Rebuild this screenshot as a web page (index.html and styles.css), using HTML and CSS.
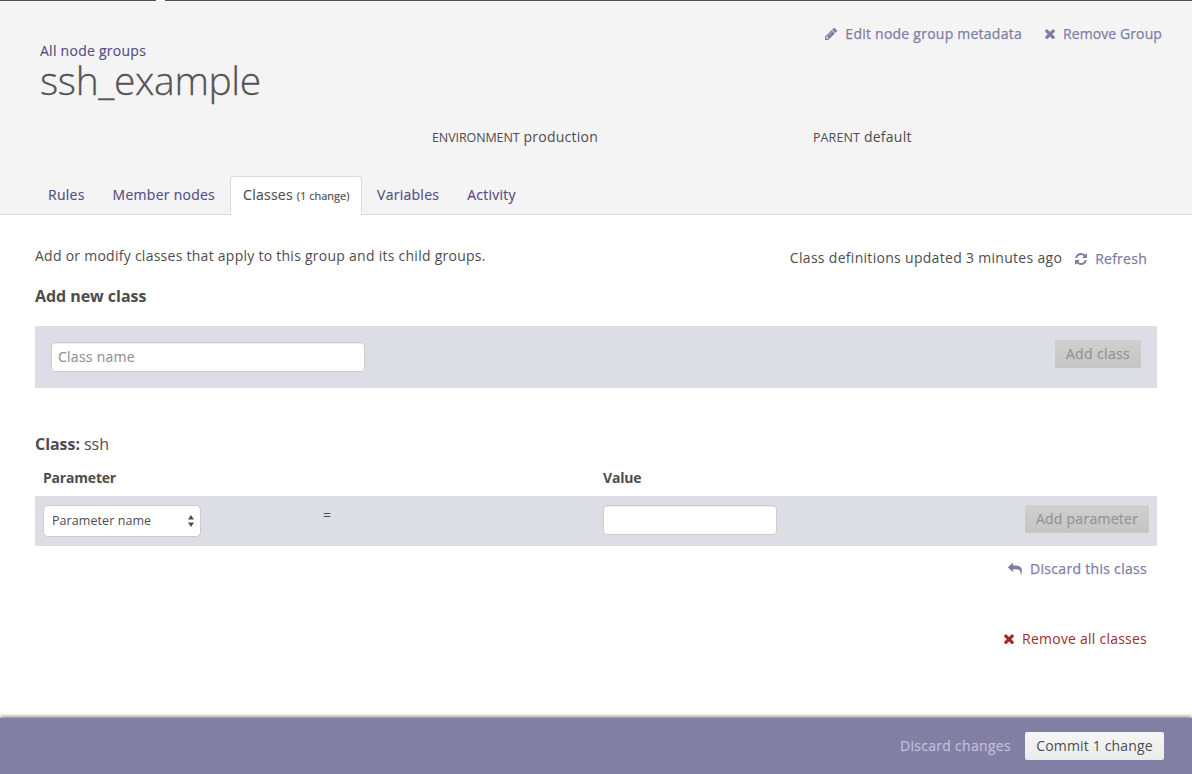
FILE: index.html
```html
<!DOCTYPE html>
<html lang="en">
<head>
<meta charset="utf-8">
<title>ssh_example</title>
<link rel="stylesheet" href="styles.css">
</head>
<body>
<svg class="defs" width="0" height="0">
  <symbol id="times" viewBox="302 346 1188 1188"><path d="M1490 1322q0 40-28 68l-136 136q-28 28-68 28t-68-28l-294-294-294 294q-28 28-68 28t-68-28l-136-136q-28-28-28-68t28-68l294-294-294-294q-28-28-28-68t28-68l136-136q28-28 68-28t68 28l294 294 294-294q28-28 68-28t68 28l136 136q28 28 28 68t-28 68l-294 294 294 294q28 28 28 68z"/></symbol>
  <symbol id="pencil" viewBox="128 149 1515 1515"><path d="M491 1536l91-91-235-235-91 91v107h128v128h107zm523-928q0-22-22-22-10 0-17 7l-542 542q-7 7-7 17 0 22 22 22 10 0 17-7l542-542q7-7 7-17zm-54-192l416 416-832 832h-416v-416zm683 96q0 53-37 90l-166 166-416-416 166-165q36-38 90-38 53 0 91 38l235 234q37 39 37 91z"/></symbol>
  <symbol id="refresh" viewBox="128 128 1536 1536"><path d="M1639 1056q0 5-1 7-64 268-268 434.5t-478 166.5q-146 0-282.5-55t-243.5-157l-129 129q-19 19-45 19t-45-19-19-45v-448q0-26 19-45t45-19h448q26 0 45 19t19 45-19 45l-137 137q71 66 161 102t187 36q134 0 250-65t186-179q11-17 53-117 8-23 30-23h192q13 0 22.5 9.5t9.5 22.5zm25-800v448q0 26-19 45t-45 19h-448q-26 0-45-19t-19-45 19-45l138-138q-148-137-349-137-134 0-250 65t-186 179q-11 17-53 117-8 23-30 23h-199q-13 0-22.5-9.5t-9.5-22.5v-7q65-268 270-434.5t480-166.5q146 0 284 55.5t245 156.5l130-129q19-19 45-19t45 19 19 45z"/></symbol>
  <symbol id="reply" viewBox="0 0 14 12"><path d="M.2 4.1 4.2.2Q5 -.2 5.1.5V2.5H7Q14 2.5 14 8Q14 9.500 12.900 11.800Q12.500 12.200 12.400 11.500Q12.900 8.500 11.500 7.300Q10.300 6.200 7 6.200H5.100V8.300Q5 9 4.200 8.600L.2 4.800Q-.1 4.500 .2 4.100Z"/></symbol>
</svg>
<div class="page">
  <header class="header">
    <div class="chrome-edge"><span class="chrome-notch"></span></div>
    <div class="header-top">
      <div class="title-block">
        <a class="crumb">All node groups</a>
        <h1 class="title">ssh_example</h1>
      </div>
      <nav class="group-actions">
        <a class="action"><svg class="icon-pencil"><use href="#pencil"/></svg><span class="t-edit">Edit node group metadata</span></a>
        <a class="action"><svg class="icon-times"><use href="#times"/></svg><span class="t-remove">Remove Group</span></a>
      </nav>
    </div>
    <div class="meta">
      <div><span class="meta-label">ENVIRONMENT</span> <span>production</span></div>
      <div><span class="meta-label meta-parent">PARENT</span> <span>default</span></div>
    </div>
    <nav class="tabs">
      <a class="tab">Rules</a>
      <a class="tab">Member nodes</a>
      <a class="tab active">Classes <small class="count">(1 change)</small></a>
      <a class="tab">Variables</a>
      <a class="tab">Activity</a>
    </nav>
  </header>
  <main class="content">
    <div class="intro">
      <p class="intro-text">Add or modify classes that apply to this group and its child groups.</p>
      <div class="updated">
        <span class="t-updated">Class definitions updated 3 minutes ago</span>
        <a class="refresh"><svg class="icon-refresh"><use href="#refresh"/></svg><span>Refresh</span></a>
      </div>
    </div>
    <h2 class="section-title">Add new class</h2>
    <div class="add-class">
      <input class="field class-field" placeholder="Class name">
      <button class="btn disabled btn-class">Add class</button>
    </div>
    <h2 class="class-title">Class: <span class="class-name">ssh</span></h2>
    <div class="grid-row heads"><span>Parameter</span><span></span><span>Value</span></div>
    <div class="grid-row params">
      <div class="select"><span>Parameter name</span><svg class="arrows" viewBox="0 0 6 12"><path d="M3 0 6 4.500H0ZM3 12 0 7.500H6Z"/></svg></div>
      <span class="equals">=</span>
      <input class="field value-field">
      <button class="btn disabled btn-param">Add parameter</button>
    </div>
    <div class="row-action discard"><svg class="icon-reply"><use href="#reply"/></svg><span>Discard this class</span></div>
    <div class="row-action remove-all"><svg class="icon-times"><use href="#times"/></svg><span>Remove all classes</span></div>
  </main>
  <footer class="footer">
    <a class="discard-changes">Discard changes</a>
    <button class="btn commit">Commit 1 change</button>
  </footer>
</div>
</body>
</html>
```
FILE: styles.css
```css
* { box-sizing: border-box; }
body { margin: 0; font: 14px/20px "Open Sans", sans-serif; letter-spacing: .26px; color: #4d4d4d; background: #fff; white-space: nowrap; }
h1, h2, p { margin: 0; }
svg { fill: currentColor; flex: none; }
.defs { position: absolute; }
.page { height: 774px; display: flex; flex-direction: column; overflow: hidden; }
.header { flex: none; height: 215px; background: #f4f4f4; border-bottom: 1px solid #dcdcdc; display: flex; flex-direction: column; }
.header > * { flex: none; }
.chrome-edge { height: 1px; background: #505050; display: flex; padding-left: 156px; }
.chrome-notch { width: 9px; background: #fff; }
.header-top { height: 126px; padding: 0 30px 0 40px; display: flex; justify-content: space-between; }
.title-block { padding-top: 40px; }
.crumb { display: block; color: #544d86; -webkit-text-stroke: .15px; }
.title { font-size: 39px; line-height: 38px; font-weight: 300; letter-spacing: -.35px; color: #555; -webkit-text-stroke: .3px; }
.group-actions { display: flex; gap: 23px; padding-top: 23px; height: 43px; }
.action { display: flex; align-items: center; gap: 8px; color: #807da5; -webkit-text-stroke: .25px; }
.t-edit { letter-spacing: .24px; }
.t-remove { letter-spacing: .1px; }
.icon-pencil { width: 12px; height: 12px; }
.icon-times { width: 10px; height: 10px; }
.meta { display: grid; grid-template-columns: 381px 1fr; padding-left: 432px; height: 49px; }
.meta-label { font-size: 12.5px; letter-spacing: -.1px; }
.meta-parent { letter-spacing: .1px; }
.tabs { display: flex; height: 39px; padding-left: 35px; align-items: stretch; }
.tab { padding: 9px 15px 0 13px; height: 39px; color: #544d86; -webkit-text-stroke: .15px; }
.tab.active { color: #4d4d4d; background: #fff; border: 1px solid #dcdcdc; border-bottom: 0; border-radius: 4px 4px 0 0; padding: 8px 12px 0; width: 132px; margin-right: 2px; }
.count { font-size: 11px; letter-spacing: 0; }
.content { flex: 1; padding: 31px 35px 0; display: flex; flex-direction: column; }
.intro { display: flex; justify-content: space-between; height: 40px; padding-right: 10px; }
.updated { display: flex; gap: 13px; padding-top: 2px; }
.t-updated { letter-spacing: .3px; }
.refresh { display: flex; align-items: center; height: 20px; gap: 8px; color: #807da5; padding-top: 1px; -webkit-text-stroke: .25px; }
.icon-refresh { width: 12px; height: 12px; }
.section-title, .class-title { font-size: 16px; line-height: 20px; font-weight: 700; letter-spacing: -.05px; }
.add-class { margin-top: 20px; height: 62px; background: #dddde6; display: flex; justify-content: space-between; align-items: flex-start; padding: 14px 16px; }
.field { height: 30px; border: 1px solid #ccc; border-radius: 4px; background: #fff; box-shadow: inset 0 1px 1px rgba(0,0,0,.075); padding: 0 6px 1px; font: inherit; letter-spacing: inherit; }
.field::placeholder { color: #929292; opacity: 1; -webkit-text-stroke: .15px; }
.class-field { width: 314px; margin-top: 2px; }
.btn { font: inherit; letter-spacing: inherit; height: 28px; border: 0; border-radius: 2px; padding: 0; line-height: 28px; }
.disabled { background: linear-gradient(#cfcfcf, #c5c5c5); color: #969696; -webkit-text-stroke: .25px; }
.btn-class { width: 86px; letter-spacing: .35px; }
.class-title { margin-top: 46px; }
.class-name { font-weight: 400; }
.grid-row { display: grid; grid-template-columns: 280px 280px 1fr auto; padding: 0 8px; }
.heads { font-weight: 700; letter-spacing: -.2px; margin-top: 14px; height: 28px; }
.params { height: 50px; background: #dddde6; padding-top: 9px; align-items: start; }
.select { width: 158px; height: 32px; background: #fff; border: 1px solid #ccc; border-radius: 5px; display: flex; align-items: center; justify-content: space-between; padding: 0 6px 0 8px; font-size: 12.5px; letter-spacing: .07px; }
.arrows { width: 6px; height: 12px; }
.value-field { width: 174px; }
.btn-param { width: 124px; }
.row-action { display: flex; justify-content: flex-end; align-items: center; gap: 8px; padding-right: 10px; height: 20px; color: #807da5; -webkit-text-stroke: .25px; }
.discard { margin-top: 13px; letter-spacing: .3px; }
.icon-reply { width: 14px; height: 12px; }
.remove-all { margin-top: 50px; color: #a32a2a; letter-spacing: .23px; -webkit-text-stroke: 0; }
.footer { flex: none; height: 56px; background: #827fa5; box-shadow: 0 -1px 4px rgba(0,0,0,.6); display: flex; justify-content: flex-end; align-items: center; gap: 14px; padding-right: 28px; color: #c0bdd8; }
.discard-changes { letter-spacing: .3px; -webkit-text-stroke: .25px; }
.commit { width: 139px; letter-spacing: .15px; color: #4d4d4d; background: linear-gradient(#f6f6f6, #ebebeb); }
```
